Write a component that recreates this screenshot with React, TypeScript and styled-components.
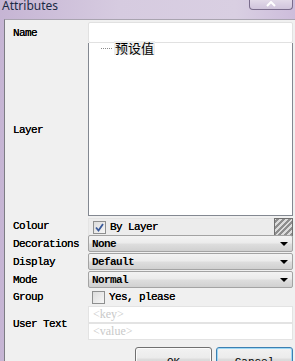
import styled, { createGlobalStyle } from 'styled-components';

const Global = createGlobalStyle`
  html, body { margin: 0; padding: 0; }
  body { width: 295px; height: 361px; overflow: hidden; background: #cbbcd8; }
`;

const Window = styled.div`
  width: 295px;
  height: 361px;
  display: flex;
  flex-direction: column;
  overflow: hidden;
  background: linear-gradient(90deg, #c6b5d4 0%, #d6cbe0 40%, #d9cfe2 80%, #cdbddb 100%);
`;

const TitleBar = styled.div`
  height: 19px;
  flex: none;
  display: flex;
  align-items: flex-start;
  justify-content: space-between;
  padding-left: 2px;
`;

const Title = styled.span`
  font-family: "Noto Sans", "Open Sans", sans-serif;
  font-size: 12px;
  line-height: 14px;
  color: #1b2a45;
  margin-top: -1px;
`;

const TitleButton = styled.div`
  width: 42px;
  height: 10px;
  margin-right: 2px;
  margin-top: -1px;
  border: 1px solid #7a6c8c;
  border-top: none;
  border-radius: 0 0 4px 4px;
  background: linear-gradient(#e4dcea, #d0c4dc);
  display: flex;
  justify-content: center;
  align-items: center;
`;

const Body = styled.div`
  flex: 1;
  margin-left: 4px;
  border-left: 1px solid #7d7d84;
  border-top: 1px solid #a9a4b0;
  background: #f0f0f0;
  padding-top: 2px;
  display: flex;
  flex-direction: column;
`;

const Form = styled.div`
  display: grid;
  grid-template-columns: 83px 205px;
  grid-template-rows: 21px 173px 18px 18px 18px 18px 16px 36px;
`;

const Label = styled.div<{ $top?: number }>`
  font-family: "Liberation Mono", monospace;
  font-size: 11px;
  letter-spacing: -0.6px;
  color: #000;
  text-shadow: 0 0 0.4px #000;
  padding-left: 8px;
  display: flex;
  align-items: center;
  margin-top: ${(p) => p.$top ?? 0}px;
`;

const TextBox = styled.div`
  background: #fff;
  border: 1px solid #e1e1e1;
  border-radius: 2px;
  box-sizing: border-box;
  height: 21px;
`;

const LayerBox = styled.div`
  background: #fff;
  border: 1px solid #838891;
  border-top: none;
  box-sizing: border-box;
  padding: 0 0 0 12px;
`;

const TreeItem = styled.div`
  display: flex;
  align-items: center;
  height: 14px;
  margin-top: -2px;
`;

const Dots = styled.span`
  width: 11px;
  height: 0;
  border-top: 1px dotted #8a8a8a;
  margin-right: 2px;
`;

const TreeText = styled.span`
  font-family: "Noto Sans CJK SC", sans-serif;
  font-size: 13px;
  line-height: 14px;
  background: #eeeeee;
  padding: 0 1px;
  color: #000;
`;

const ColourRow = styled.div`
  display: flex;
  margin-top: 2px;
  height: 18px;
`;

const CheckArea = styled.div`
  flex: 1;
  display: flex;
  align-items: center;
  gap: 4px;
  padding-left: 4px;
  background: #ececec;
  border: 1px solid #e4e4e4;
  border-right: none;
  box-sizing: border-box;
`;

const CheckLine = styled.div`
  display: flex;
  align-items: center;
  gap: 4px;
  padding-left: 4px;
`;

const Box = styled.span`
  width: 13px;
  height: 13px;
  box-sizing: border-box;
  border: 1px solid #8e8f8f;
  background: linear-gradient(135deg, #dcdcdc, #f6f6f6);
  display: flex;
  align-items: center;
  justify-content: center;
`;

const CheckText = styled.span`
  font-family: "Liberation Mono", monospace;
  font-size: 11px;
  letter-spacing: -0.6px;
  color: #000;
  text-shadow: 0 0 0.4px #000;
`;

const Swatch = styled.div`
  width: 19px;
  height: 18px;
  box-sizing: border-box;
  border: 1px solid #707070;
  background: repeating-linear-gradient(
    -45deg,
    #8e8e8e 0px,
    #8e8e8e 2px,
    #dcdcdc 2px,
    #dcdcdc 4px
  );
`;

const Combo = styled.div`
  height: 17px;
  margin-top: 1px;
  box-sizing: border-box;
  border: 1px solid #a3a3a3;
  border-radius: 2px;
  background: linear-gradient(#f3f3f3 0%, #ebebeb 48%, #dedede 52%, #d0d0d0 100%);
  display: flex;
  align-items: center;
  justify-content: space-between;
  padding: 0 4px 0 3px;
`;

const ComboText = styled.span`
  font-family: "Liberation Mono", monospace;
  font-size: 11px;
  letter-spacing: -0.6px;
  font-weight: bold;
  color: #000;
`;

const Arrow = styled.span`
  width: 0;
  height: 0;
  border-left: 4px solid transparent;
  border-right: 4px solid transparent;
  border-top: 4px solid #000;
`;

const Inputs = styled.div`
  display: flex;
  flex-direction: column;
  margin-top: 2px;
`;

const FieldInput = styled.div`
  height: 18px;
  background: #fff;
  border: 1px solid #e3e3e3;
  box-sizing: border-box;
  font-family: "Liberation Serif", serif;
  font-size: 12px;
  color: #c9c9c9;
  display: flex;
  align-items: center;
  padding-left: 4px;
`;

const Buttons = styled.div`
  display: flex;
  justify-content: flex-end;
  gap: 4px;
  margin-top: 7px;
  padding-right: 2px;
`;

const Button = styled.div<{ $focused?: boolean }>`
  width: 77px;
  height: 23px;
  box-sizing: border-box;
  border: 1px solid ${(p) => (p.$focused ? '#3c7fb1' : '#707070')};
  border-radius: 3px;
  box-shadow: ${(p) => (p.$focused ? 'inset 0 0 0 1px #9ed8f5' : 'inset 0 0 0 1px #fbfbfb')};
  background: linear-gradient(#f2f2f2 0%, #ebebeb 48%, #dddddd 52%, #cfcfcf 100%);
  font-family: "Liberation Mono", monospace;
  font-size: 11px;
  display: flex;
  align-items: center;
  justify-content: center;
  padding-top: 6px;
`;

const Check = () => (
  <svg width="9" height="9" viewBox="0 0 9 9">
    <path d="M1 4.5 L3.5 7.5 L8 1" fill="none" stroke="#3a5a9a" strokeWidth="1.8" />
  </svg>
);

export default function App() {
  return (
    <>
      <Global />
      <Window>
        <TitleBar>
          <Title>Attributes</Title>
          <TitleButton>
            <svg width="10" height="6" viewBox="0 0 10 6">
              <path d="M1 5 L5 1 L9 5" fill="none" stroke="#ffffff" strokeWidth="2" />
            </svg>
          </TitleButton>
        </TitleBar>
        <Body>
          <Form>
            <Label>Name</Label>
            <TextBox />

            <Label>Layer</Label>
            <LayerBox>
              <TreeItem>
                <Dots />
                <TreeText>预设值</TreeText>
              </TreeItem>
            </LayerBox>

            <Label $top={2}>Colour</Label>
            <ColourRow>
              <CheckArea>
                <Box><Check /></Box>
                <CheckText>By Layer</CheckText>
              </CheckArea>
              <Swatch />
            </ColourRow>

            <Label $top={2}>Decorations</Label>
            <Combo>
              <ComboText>None</ComboText>
              <Arrow />
            </Combo>

            <Label $top={2}>Display</Label>
            <Combo>
              <ComboText>Default</ComboText>
              <Arrow />
            </Combo>

            <Label $top={2}>Mode</Label>
            <Combo>
              <ComboText>Normal</ComboText>
              <Arrow />
            </Combo>

            <Label $top={2}>Group</Label>
            <CheckLine style={{ marginTop: 2 }}>
              <Box />
              <CheckText>Yes, please</CheckText>
            </CheckLine>

            <Label $top={4}>User Text</Label>
            <Inputs>
              <FieldInput>&lt;key&gt;</FieldInput>
              <FieldInput>&lt;value&gt;</FieldInput>
            </Inputs>
          </Form>
          <Buttons>
            <Button>OK</Button>
            <Button $focused>Cancel</Button>
          </Buttons>
        </Body>
      </Window>
    </>
  );
}
